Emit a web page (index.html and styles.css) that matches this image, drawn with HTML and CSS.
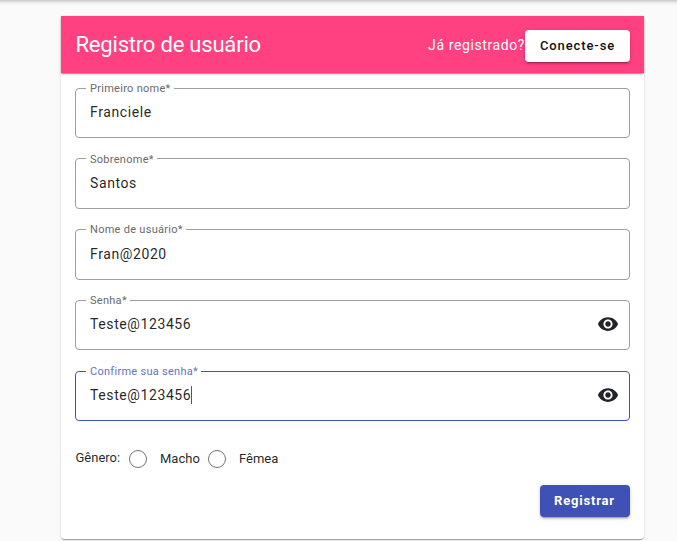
FILE: index.html
```html
<!DOCTYPE html>
<html lang="pt-BR">
<head>
<meta charset="utf-8">
<title>Registro de usuário</title>
<link rel="stylesheet" href="styles.css">
</head>
<body>
<main class="card">
  <header class="card-header">
    <h1 class="title">Registro de usuário</h1>
    <span class="hint">Já registrado?</span>
    <button class="btn btn-login" type="button">Conecte-se</button>
  </header>
  <form class="form">
    <div class="field"><label class="label">Primeiro nome*</label><span class="value">Franciele</span></div>
    <div class="field"><label class="label">Sobrenome*</label><span class="value">Santos</span></div>
    <div class="field"><label class="label">Nome de usuário*</label><span class="value">Fran@2020</span></div>
    <div class="field"><label class="label">Senha*</label><span class="value">Teste@123456</span>
      <svg class="eye" viewBox="0 0 24 24"><path d="M12 4.5C7 4.5 2.73 7.61 1 12c1.73 4.39 6 7.5 11 7.5s9.27-3.11 11-7.5c-1.73-4.39-6-7.5-11-7.5zM12 17c-2.76 0-5-2.24-5-5s2.24-5 5-5 5 2.24 5 5-2.24 5-5 5zm0-8c-1.66 0-3 1.34-3 3s1.34 3 3 3 3-1.34 3-3-1.34-3-3-3z"/></svg></div>
    <div class="field focused"><label class="label">Confirme sua senha*</label><span class="value">Teste@123456</span><i class="caret"></i>
      <svg class="eye" viewBox="0 0 24 24"><path d="M12 4.5C7 4.5 2.73 7.61 1 12c1.73 4.39 6 7.5 11 7.5s9.27-3.11 11-7.5c-1.73-4.39-6-7.5-11-7.5zM12 17c-2.76 0-5-2.24-5-5s2.24-5 5-5 5 2.24 5 5-2.24 5-5 5zm0-8c-1.66 0-3 1.34-3 3s1.34 3 3 3 3-1.34 3-3-1.34-3-3-3z"/></svg></div>
    <div class="gender">
      <span class="gender-label">Gênero:</span>
      <span class="radio"></span><span class="option">Macho</span>
      <span class="radio"></span><span class="option">Fêmea</span>
    </div>
    <div class="actions"><button class="btn btn-submit" type="button">Registrar</button></div>
  </form>
</main>
</body>
</html>
```
FILE: styles.css
```css
* { box-sizing: border-box; }
html { height: 541px; overflow: hidden; }
body {
  margin: 0;
  height: 541px;
  overflow: hidden;
  padding: 16px 33px 0 61px;
  background: linear-gradient(#cbcbcb 0, #d4d4d4 1px, #e4e4e4 2px, #f1f1f1 3px, #f8f8f8 5px, #fafafa 6px);
  font-family: Roboto, sans-serif;
  color: rgba(0, 0, 0, 0.87);
}
.card {
  width: 583px;
  height: 523px;
  background: #fff;
  border-radius: 4px;
  box-shadow: 0 2px 1px -1px rgba(0,0,0,.2), 0 1px 1px rgba(0,0,0,.14), 0 1px 3px rgba(0,0,0,.12);
}
.card-header {
  display: flex;
  align-items: center;
  height: 57px;
  padding: 2px 14px 0 14.5px;
  background: #ff4081;
  color: #fff;
  box-shadow: 0 2px 1px -1px rgba(0,0,0,.2), 0 1px 1px rgba(0,0,0,.14), 0 1px 3px rgba(0,0,0,.12);
}
.title {
  margin: -2px auto 0 0;
  font-size: 22px;
  line-height: 28px;
  font-weight: 400;
  letter-spacing: -.2px;
}
.hint {
  margin-top: -2px;
  font-size: 14px;
  letter-spacing: .6px;
  white-space: nowrap;
}
.btn {
  border: 0;
  padding: 0;
  height: 32px;
  border-radius: 4px;
  font-family: inherit;
  font-size: 13px;
  box-shadow: 0 3px 1px -2px rgba(0,0,0,.2), 0 2px 2px rgba(0,0,0,.14), 0 1px 5px rgba(0,0,0,.12);
}
.btn-login { width: 105px; background: #fff; color: #111; font-weight: 500; letter-spacing: .9px; }
.form {
  display: flex;
  flex-direction: column;
  padding: 14.6px 14px 0;
}
.field {
  position: relative;
  display: flex;
  flex: none;
  align-items: center;
  height: 50.6px;
  margin-bottom: 20.15px;
  padding: 0 9px 1.4px 14px;
  border: 1px solid #9e9e9e;
  border-radius: 4px;
}
.label {
  position: absolute;
  top: -6.7px;
  left: 10px;
  padding: 0 3px 0 4px;
  background: #fff;
  font-size: 11px;
  line-height: 14px;
  letter-spacing: .28px;
  color: #6a6a6a;
  white-space: nowrap;
}
.value { font-size: 14px; line-height: 20px; letter-spacing: .6px; }
.focused { border-color: #3f51b5; }
.focused .label { color: #6573c3; }
.caret { width: 1px; height: 18px; background: #3f51b5; }
.eye { width: 24px; height: 22px; margin-left: auto; fill: #212529; }
.gender {
  display: flex;
  align-items: center;
  height: 20px;
  margin-top: 7.65px;
  font-size: 13px;
}
.gender-label { width: 54px; padding: 0 0 2px .5px; }
.radio {
  width: 18px;
  height: 18px;
  border: 1px solid #757575;
  border-radius: 50%;
}
.option { width: 61px; padding-left: 13px; }
.actions { display: flex; justify-content: flex-end; margin-top: 16px; }
.btn-submit { width: 90px; background: #3f51b5; color: #fff; font-weight: 700; letter-spacing: .8px; padding-right: 1px; }
```
